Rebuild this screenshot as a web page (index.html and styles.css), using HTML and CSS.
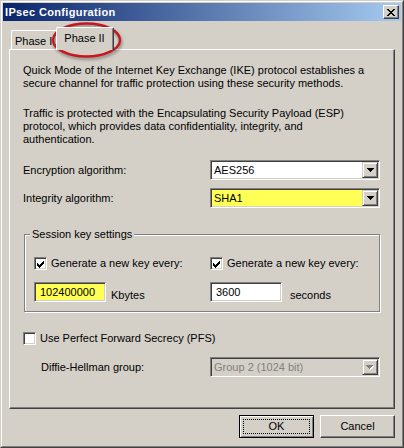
FILE: index.html
```html
<!DOCTYPE html>
<html>
<head>
<meta charset="utf-8">
<link rel="stylesheet" href="styles.css">
</head>
<body>
<div class="window">
  <div class="frame">
    <div class="titlebar">
      <span class="title">IPsec Configuration</span>
      <span class="close"><svg width="8" height="7" viewBox="0 0 8 7" shape-rendering="crispEdges"><path fill="#000" d="M0 0h2v1H0z M6 0h2v1H6z M1 1h2v1H1z M5 1h2v1H5z M2 2h4v1H2z M3 3h2v1H3z M2 4h4v1H2z M1 5h2v1H1z M5 5h2v1H5z M0 6h2v1H0z M6 6h2v1H6z"/></svg></span>
    </div>
    <div class="tabs">
      <div class="tab">Phase I</div>
      <div class="tab active">Phase II</div>
    </div>
    <div class="panel">
      <p class="para">Quick Mode of the Internet Key Exchange (IKE) protocol establishes a<br>secure channel for traffic protection using these security methods.</p>
      <p class="para second">Traffic is protected with the Encapsulating Security Payload (ESP)<br>protocol, which provides data confidentiality, integrity, and<br>authentication.</p>
      <div class="row first-row">
        <span class="label">Encryption algorithm:</span>
        <div class="combo"><span class="value">AES256</span><span class="drop"><svg width="7" height="4" viewBox="0 0 7 4" shape-rendering="crispEdges"><path fill="#000" d="M0 0h7v1H0z M1 1h5v1H1z M2 2h3v1H2z M3 3h1v1H3z"/></svg></span></div>
      </div>
      <div class="row next-row">
        <span class="label">Integrity algorithm:</span>
        <div class="combo yellow"><span class="value">SHA1</span><span class="drop"><svg width="7" height="4" viewBox="0 0 7 4" shape-rendering="crispEdges"><path fill="#000" d="M0 0h7v1H0z M1 1h5v1H1z M2 2h3v1H2z M3 3h1v1H3z"/></svg></span></div>
      </div>
      <fieldset class="group">
        <legend>Session key settings</legend>
        <div class="group-grid">
          <div class="check"><span class="box"><svg width="7" height="7" viewBox="0 0 7 7" shape-rendering="crispEdges"><path fill="#000" d="M0 2h1v3H0z M1 3h1v3H1z M2 4h1v3H2z M3 3h1v3H3z M4 2h1v3H4z M5 1h1v3H5z M6 0h1v3H6z"/></svg></span><span>Generate a new key every:</span></div>
          <div class="check"><span class="box"><svg width="7" height="7" viewBox="0 0 7 7" shape-rendering="crispEdges"><path fill="#000" d="M0 2h1v3H0z M1 3h1v3H1z M2 4h1v3H2z M3 3h1v3H3z M4 2h1v3H4z M5 1h1v3H5z M6 0h1v3H6z"/></svg></span><span>Generate a new key every:</span></div>
          <div class="field"><span class="edit yellow">102400000</span><span class="unit kb">Kbytes</span></div>
          <div class="field"><span class="edit">3600</span><span class="unit sec">seconds</span></div>
        </div>
      </fieldset>
      <div class="check pfs"><span class="box"></span><span>Use Perfect Forward Secrecy (PFS)</span></div>
      <div class="row dh-row">
        <span class="label">Diffie-Hellman group:</span>
        <div class="combo disabled"><span class="value">Group 2 (1024 bit)</span><span class="drop"><svg width="8" height="5" viewBox="0 0 8 5" shape-rendering="crispEdges"><path fill="#fff" d="M1 1h7v1H1z M2 2h5v1H2z M3 3h3v1H3z M4 4h1v1H4z"/><path fill="#808080" d="M0 0h7v1H0z M1 1h5v1H1z M2 2h3v1H2z M3 3h1v1H3z"/></svg></span></div>
      </div>
    </div>
    <div class="buttons">
      <button class="btn default"><span class="focus">OK</span></button>
      <button class="btn">Cancel</button>
    </div>
  </div>
  <svg class="highlight" width="74" height="40" viewBox="0 0 74 40"><ellipse cx="36.5" cy="19" rx="33.5" ry="16.5" fill="none" stroke="#c8161d" stroke-width="2.4"/></svg>
</div>
</body>
</html>
```
FILE: styles.css
```css
* { box-sizing: border-box; }
html, body { margin: 0; padding: 0; background: #d4d0c8; }
body {
  font-family: "Liberation Sans", Arial, sans-serif;
  font-size: 11px;
  line-height: 13px;
  color: #000;
}
.window {
  position: relative;
  width: 404px;
  height: 448px;
  border: 1px solid;
  border-color: #d4d0c8 #404040 #404040 #d4d0c8;
  background: #d4d0c8;
}
.frame {
  height: 100%;
  border: 1px solid;
  border-color: #fff #808080 #808080 #fff;
  padding: 1px;
  display: flex;
  flex-direction: column;
}
.titlebar {
  height: 18px;
  flex: none;
  display: flex;
  align-items: center;
  justify-content: space-between;
  padding: 0 2px 0 2px;
  background: linear-gradient(to right, #0a246a, #a6caf0);
}
.title {
  color: #fff;
  font-weight: bold;
  letter-spacing: 0.35px;
  line-height: 18px;
}
.close {
  width: 16px;
  height: 14px;
  background: #d4d0c8;
  border: 1px solid;
  border-color: #fff #404040 #404040 #fff;
  box-shadow: inset -1px -1px 0 #808080;
  display: flex;
  align-items: center;
  justify-content: center;
}
.close svg { display: block; }
.tabs {
  flex: none;
  height: 22px;
  margin: 6px 0 0 8px;
  display: flex;
  align-items: flex-end;
}
.tab {
  height: 19px;
  padding: 4px 5px 0 3px;
  border-top: 1px solid #fff;
  border-left: 1px solid #fff;
  border-right: 1px solid #404040;
  box-shadow: inset -1px 0 0 #808080;
  border-radius: 2px 2px 0 0;
  background: #d4d0c8;
  white-space: nowrap;
}
.tab.active {
  position: relative;
  z-index: 1;
  height: 23px;
  margin: 0 -2px -1px -2px;
  padding: 4px 8px 0 7px;
}
.panel {
  flex: 1;
  margin: 0 6px;
  border: 1px solid;
  border-color: #fff #404040 #404040 #fff;
  box-shadow: inset -1px -1px 0 #808080;
  padding: 14px 14px 0 13px;
}
.para {
  margin: 0;
  white-space: nowrap;
}
.para.second { margin-top: 17px; }
.row {
  display: grid;
  grid-template-columns: 187px 170px;
  align-items: center;
  height: 20px;
}
.first-row { margin-top: 14px; }
.next-row { margin-top: 8px; }
.dh-row {
  margin-top: 12px;
  padding-left: 18px;
  grid-template-columns: 169px 170px;
}
.combo, .edit, .box {
  border: 1px solid;
  border-color: #808080 #fff #fff #808080;
  box-shadow: inset 1px 1px 0 #404040, inset -1px -1px 0 #d4d0c8;
  background: #fff;
}
.combo {
  height: 20px;
  width: 170px;
  display: flex;
  justify-content: space-between;
  padding: 1px;
}
.combo .value {
  padding: 2px 0 0 2px;
  line-height: 13px;
}
.combo.yellow { background: #ffff55; }
.combo.disabled { background: #d4d0c8; }
.combo.disabled .value { color: #808080; }
.drop {
  width: 16px;
  height: 16px;
  margin: 0;
  background: #d4d0c8;
  border: 1px solid;
  border-color: #d4d0c8 #404040 #404040 #d4d0c8;
  box-shadow: inset 1px 1px 0 #fff, inset -1px -1px 0 #808080;
  display: flex;
  align-items: center;
  justify-content: center;
}
.drop svg { display: block; }
.group {
  margin: 20px 0 0 1px;
  padding: 17px 0 9px 9px;
  border: 1px solid #808080;
  box-shadow: 1px 1px 0 #fff, inset 1px 1px 0 #fff;
  min-width: 0;
}
.group legend {
  margin-left: -4px;
  padding: 0 2px;
  line-height: 12px;
  background: #d4d0c8;
}
.group-grid {
  display: grid;
  grid-template-columns: 176px 1fr;
  row-gap: 12px;
}
.check {
  display: flex;
  align-items: center;
  height: 13px;
  white-space: nowrap;
}
.box {
  width: 13px;
  height: 13px;
  flex: none;
  margin-right: 4px;
  display: flex;
  align-items: center;
  justify-content: center;
}
.box svg { display: block; margin: 1px 0 0 0; }
.field {
  display: flex;
  align-items: flex-end;
  height: 20px;
}
.edit {
  width: 72px;
  height: 20px;
  padding: 3px 4px 0 5px;
  line-height: 13px;
}
.edit.yellow { background: #ffff55; }
.unit.kb { margin-left: 5px; }
.unit.sec { margin-left: 8px; }
.pfs { margin-top: 20px; }
.buttons {
  flex: none;
  display: flex;
  justify-content: flex-end;
  gap: 6px;
  padding: 6px 6px 7px 0;
}
.btn {
  width: 75px;
  height: 23px;
  margin: 0;
  padding: 0 0 1px 0;
  font: inherit;
  color: #000;
  background: #d4d0c8;
  border: 1px solid;
  border-color: #fff #404040 #404040 #fff;
  box-shadow: inset -1px -1px 0 #808080;
  border-radius: 0;
  display: flex;
  align-items: center;
  justify-content: center;
}
.btn.default {
  border-color: #000;
  box-shadow: inset 1px 1px 0 #fff, inset -1px -1px 0 #808080;
  padding: 3px;
}
.focus {
  flex: 1;
  align-self: stretch;
  border: 1px dotted #000;
  display: flex;
  align-items: center;
  justify-content: center;
  padding-bottom: 1px;
}
.highlight {
  position: absolute;
  left: 49px;
  top: 20px;
  filter: drop-shadow(1px 2px 1.5px rgba(0, 0, 0, 0.4));
}
```
